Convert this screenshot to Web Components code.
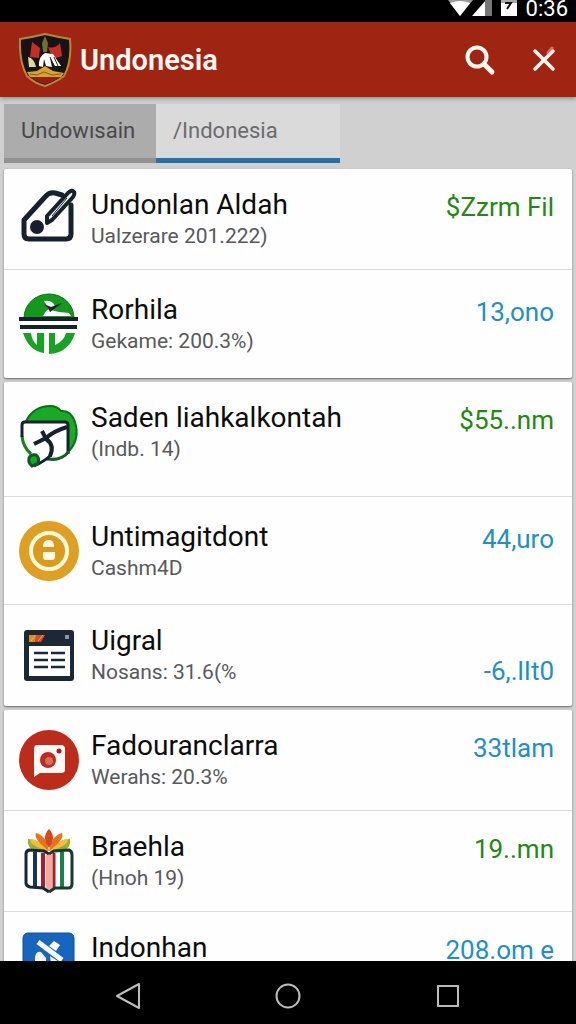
<!DOCTYPE html>
<html lang="id">
<head>
<meta charset="utf-8">
<meta name="viewport" content="width=device-width, initial-scale=1">
<title>Undonesia</title>
<style>
    body {
        margin: 0;
        font-family: Roboto, "Liberation Sans", sans-serif;
        background: #d0d0d1;
    }
</style>
</head>
<body>
<app-screen>
    <status-bar slot="top">0:36</status-bar>
    <app-header slot="top">Undonesia</app-header>
    <app-tabs slot="top" labels="Undowısain,/Indonesia" selected="1"></app-tabs>

    <account-card>
        <account-row icon="tag">Undonlan Aldah<span slot="detail">Ualzerare 201.222)</span><span slot="amount">$Zzrm Fil</span></account-row>
        <account-row icon="globe" size="tall" tone="blue">Rorhila<span slot="detail">Gekame: 200.3%)</span><span slot="amount">13,ono</span></account-row>
    </account-card>
    <account-card>
        <account-row icon="chat" size="large">Saden liahkalkontah<span slot="detail">(Indb. 14)</span><span slot="amount">$55..nm</span></account-row>
        <account-row icon="coin" size="tall" tone="blue">Untimagitdont<span slot="detail">Cashm4D</span><span slot="amount">44,uro</span></account-row>
        <account-row icon="sheet" tone="blue" amount="low">Uigral<span slot="detail">Nosans: 31.6(%</span><span slot="amount">-6,.lIt0</span></account-row>
    </account-card>
    <account-card>
        <account-row icon="camera" tone="blue">Fadouranclarra<span slot="detail">Werahs: 20.3%</span><span slot="amount">33tlam</span></account-row>
        <account-row icon="gift">Braehla<span slot="detail">(Hnoh 19)</span><span slot="amount">19..mn</span></account-row>
        <account-row icon="tools" tone="blue">Indonhan<span slot="amount">208.om e</span></account-row>
    </account-card>

    <nav-bar slot="bottom"></nav-bar>
</app-screen>

<script>
const icons = {
    tag: `
        <path d="M52 16V45Q52 50 47 50H10Q5 50 5 45V31L26 8Q30 3 36 4L43 6" fill="none" stroke="#17202f" stroke-width="5" stroke-linejoin="round" stroke-linecap="round"/>
        <path d="M49 4Q53 0 55 3Q56 5 54 8L33 31L28 34V27Z" fill="#fff" stroke="#17202f" stroke-width="4" stroke-linejoin="round"/>
        <path d="M33 27L48 9" stroke="#17202f" stroke-width="1"/>
        <circle cx="18" cy="38" r="7" fill="#17202f"/>`,
    globe: `
        <path d="M5 24A25 24 0 0 1 55 24Z" fill="#15991d" stroke="#087512" stroke-width="1"/>
        <path d="M25 7Q31 6 34 9L36 12L32 16L40 18L50 19L52 22H24L27 17L30 15Z" fill="#fff"/>
        <path d="M25 10L32 13L43 9L31 18L29 14Z" fill="#17202f"/>
        <path d="M0 25H59M1 33H58" stroke="#17202f" stroke-width="4"/>
        <path d="M4 39H12Q13 47 18 51V39H25V59Q10 57 4 39ZM30 39H36V51Q45 47 47 39H56Q50 59 30 60Z" fill="#17a321"/>`,
    chat: `
        <path d="M7 12Q15 -3 31 -3Q38 -3 42 2Q52 1 56 13Q61 29 51 41Q45 51 33 51Z" fill="#18aa25" stroke="#0b7118" stroke-width="2"/>
        <path d="M4 12H48V46Q40 52 28 50L17 46Q4 40 3 27Z" fill="#fff"/>
        <path d="M3 27Q4 38 12 45" fill="none" stroke="#14841d" stroke-width="3"/>
        <path d="M3 28V16Q3 13 6 13H46Q49 13 49 16V45" fill="none" stroke="#17202f" stroke-width="3"/>
        <path d="M50 42Q43 52 28 50" fill="none" stroke="#135f28" stroke-width="3"/>
        <path d="M32 46Q26 52 15 57" fill="none" stroke="#17202f" stroke-width="3"/>
        <path d="M10 49Q12 45 17 46Q22 50 18 55L13 57Q9 54 10 49Z" fill="#18aa25" stroke="#0e5920" stroke-width="3"/>
        <path d="M23 22L27 30Q36 36 31 47M15 35L27 29Q35 22 48 18" fill="none" stroke="#17202f" stroke-width="4"/>`,
    coin: `
        <circle cx="30" cy="30" r="30" fill="#dfa021"/>
        <circle cx="30" cy="30" r="18" fill="#dc9a1b" stroke="#fff9df" stroke-width="4"/>
        <path d="M24 26V24Q25 19 30 19Q34 19 35 24V26ZM24 31H36V36Q36 39 33 39H27Q24 39 24 36Z" fill="#fffbe8"/>`,
    sheet: `
        <rect x="5" y="4" width="50" height="51" rx="3" fill="#1b2836"/>
        <rect x="10" y="20" width="41" height="30" fill="#fff"/>
        <path d="M10 9H18L16 16H10Z" fill="#dc8c23"/>
        <path d="M17 9H26L22 16H16Z" fill="#d84c2a"/>
        <path d="M12 15L16 9M19 15L24 9" stroke="#efb32d" stroke-width="1"/>
        <rect x="46" y="9" width="4" height="4" fill="#8799a8"/>
        <path d="M15 27H29M32 27H46M15 34H29M32 34H46M15 41H29M32 41H46" stroke="#1b2836" stroke-width="2.5"/>`,
    camera: `
        <circle cx="30" cy="30" r="30" fill="#bd2c1b"/>
        <path d="M18 15H42Q46 15 46 19V40Q46 43 42 43H21L15 47V19Q15 15 18 15Z" fill="#fff8f4"/>
        <circle cx="29" cy="30" r="8" fill="#ba2c20"/>
        <circle cx="30" cy="31" r="4" fill="#d66c5c"/>
        <circle cx="40" cy="21" r="2.5" fill="#9e2118"/>`,
    gift: `
        <path d="M30 20Q7 23 9 8Q19 8 30 20Q53 23 51 8Q41 8 30 20Z" fill="#94b52a"/>
        <path d="M30 20Q8 14 12 8Q19 8 30 20Q52 14 48 8Q41 8 30 20Z" fill="#f5bc3c"/>
        <path d="M30 20Q14 8 17 2Q27 4 30 20Q46 8 43 2Q33 4 30 20Z" fill="#ec701d"/>
        <path d="M30 17Q22 6 30 -2Q38 6 30 17Z" fill="#d8451f"/>
        <path d="M10 19L25 20L30 23L35 20L50 19Q53 20 53 24V53Q53 57 49 57L36 57L30 61L24 57L11 56Q7 55 7 52V23Q7 20 10 19Z" fill="#fff"/>
        <path d="M16 21V55" stroke="#1b3557" stroke-width="4"/>
        <path d="M24 22V57" stroke="#a51d2b" stroke-width="4"/>
        <path d="M30 24V59" stroke="#f2aaa0" stroke-width="6"/>
        <path d="M35 22V57" stroke="#a51d2b" stroke-width="3"/>
        <path d="M43 21V56" stroke="#198345" stroke-width="4"/>
        <path d="M30 23L25 20L10 19Q7 20 7 23V52Q7 55 11 56L24 57L30 61" fill="none" stroke="#172640" stroke-width="3"/>
        <path d="M30 23L35 20L50 19Q53 20 53 24V53Q53 57 49 57L36 57L30 61" fill="none" stroke="#173b31" stroke-width="3"/>`,
    tools: `
        <rect x="4" y="0" width="51" height="55" rx="5" fill="#1665be" stroke="#114f98" stroke-width="1"/>
        <path d="M30 13L35 8L41 12L37 18Z" fill="#fff"/>
        <path d="M16 36V24Q17 18 22 19L27 25V36ZM31 23L45 32L41 36L32 31Z" fill="#edf6ff"/>
        <path d="M19 9L43 27" stroke="#fff" stroke-width="5"/>`
};

class AppScreen extends HTMLElement {
    constructor() {
        super();
        this.attachShadow({mode: "open"}).innerHTML = `
        <style>
            :host { display: flex; flex-direction: column; height: 100vh; overflow: hidden; }
            main {
                flex: 1;
                min-height: 0;
                overflow: hidden;
                display: flex;
                flex-direction: column;
                gap: 4px;
                padding: 6px 4px 0;
            }
        </style>
        <slot name="top"></slot>
        <main><slot></slot></main>
        <slot name="bottom"></slot>`;
    }
}
customElements.define('app-screen', AppScreen);

class StatusBar extends HTMLElement {
    constructor() {
        super();
        this.attachShadow({mode: "open"}).innerHTML = `
        <style>
            :host {
                display: flex;
                justify-content: flex-end;
                align-items: flex-start;
                gap: 8px;
                height: 22px;
                padding-right: 8px;
                overflow: hidden;
                background: #000;
                color: #fff;
                font-size: 22px;
                line-height: 17px;
            }
            svg { display: block; }
        </style>
        <svg width="72" height="22" viewBox="0 0 72 22" aria-hidden="true">
            <path d="M2 0H27L14 16Z" fill="#999"/>
            <path d="M4 3Q14 -1 24 3L14 16Z" fill="#fff"/>
            <path d="M26 16L40 0V16Z" fill="#fff"/>
            <path d="M39 0H46V16H39Z" fill="#777"/>
            <path d="M55 0H71V16H55Z" fill="#fff"/>
            <path d="M55 0H71V3H55Z" fill="#aaa"/>
            <path d="M59 3H65L61 9" fill="none" stroke="#111" stroke-width="2"/>
        </svg>
        <time><slot></slot></time>`;
    }
}
customElements.define('status-bar', StatusBar);

class AppHeader extends HTMLElement {
    constructor() {
        super();
        this.attachShadow({mode: "open"}).innerHTML = `
        <style>
            :host { display: block; z-index: 1; box-shadow: 0 1px 5px rgba(0, 0, 0, .4); }
            header {
                display: flex;
                align-items: center;
                height: 75px;
                padding: 0 8px 0 19px;
                background: #9f2412;
                color: #fff8f2;
            }
            h1 { flex: 1; margin: 0 0 0 8px; font-size: 29px; font-weight: 600; line-height: 36px; }
            button {
                display: grid;
                place-items: center;
                width: 48px;
                height: 48px;
                margin-left: 16px;
                padding: 0;
                border: 0;
                background: none;
                color: inherit;
            }
            svg { display: block; }
        </style>
        <header>
            <svg width="53" height="54" viewBox="0 0 53 54" aria-hidden="true">
                <path d="M1 6Q14 4 26 1Q39 4 51 6Q53 29 45 43Q37 49 26 53Q15 50 8 43Q0 29 1 6Z" fill="#151313" stroke="#b98932" stroke-width="2"/>
                <path d="M9 42L44 42Q37 48 26 51Q15 48 9 42Z" fill="#991c14"/>
                <path d="M13 9L21 15L20 25L11 24ZM29 14Q36 16 41 10L43 23L34 26Z" fill="#c92c25"/>
                <path d="M26 3L29 10L28 19H24L23 10Z" fill="#69742d"/>
                <path d="M9 24Q15 25 17 34L10 34Z" fill="#d6dc9a"/>
                <path d="M20 33Q19 24 26 20L34 21L42 33L36 33L31 25L33 34L27 33L25 26L24 34Z" fill="#fff"/>
                <path d="M31 24L35 33M35 24L39 33" stroke="#222" stroke-width="1"/>
                <path d="M8 39L18 38L26 33L34 38L45 40L42 44H11Z" fill="#d5a52b"/>
                <path d="M11 41L18 42L25 39L33 42L42 41" fill="none" stroke="#875a17" stroke-width="1"/>
            </svg>
            <h1><slot></slot></h1>
            <button type="button" aria-label="Cari">
                <svg width="32" height="32" viewBox="0 0 32 32">
                    <circle cx="13" cy="13" r="9.5" fill="none" stroke="currentColor" stroke-width="4"/>
                    <path d="M20 20L28 28" stroke="currentColor" stroke-width="5" stroke-linecap="round"/>
                </svg>
            </button>
            <button type="button" aria-label="Tutup">
                <svg width="28" height="28" viewBox="0 0 28 28">
                    <path d="M18 7L22 2" stroke="#e76b53" stroke-width="3" stroke-linecap="round"/>
                    <path d="M5 5L23 23M23 5L5 23" stroke="currentColor" stroke-width="3.5" stroke-linecap="round"/>
                </svg>
            </button>
        </header>`;
    }
}
customElements.define('app-header', AppHeader);

class AppTabs extends HTMLElement {
    constructor() {
        super();
        this.attachShadow({mode: "open"}).innerHTML = `
        <style>
            :host { display: block; padding: 7px 4px 0; }
            div { display: flex; }
            button {
                height: 59px;
                padding: 0 17px;
                border: 0;
                border-bottom: 5px solid #929292;
                background: #acacac;
                color: #48494b;
                font: 22px/32px Roboto, "Liberation Sans", sans-serif;
                text-align: left;
            }
            button:first-child { min-width: 152px; }
            button[aria-selected="true"] {
                min-width: 184px;
                border-color: #2a6ea9;
                background: #dadada;
                color: #6b6c6e;
            }
        </style>
        <div role="tablist"></div>`;
    }

    connectedCallback() {
        let list = this.shadowRoot.querySelector('div');
        let selected = Number(this.getAttribute('selected'));
        this.getAttribute('labels').split(',').forEach((label, index) => {
            let tab = document.createElement('button');
            tab.setAttribute('type', 'button');
            tab.setAttribute('role', 'tab');
            tab.setAttribute('aria-selected', index === selected);
            tab.textContent = label;
            list.appendChild(tab);
        });
    }
}
customElements.define('app-tabs', AppTabs);

class AccountCard extends HTMLElement {
    constructor() {
        super();
        this.attachShadow({mode: "open"}).innerHTML = `
        <style>
            :host {
                display: block;
                flex: none;
                border-radius: 2px;
                background: #fefefe;
                box-shadow: 0 1px 2px rgba(0, 0, 0, .5);
            }
            ::slotted(account-row:not(:last-child)) { border-bottom: 1px solid #dcddde; }
        </style>
        <slot></slot>`;
    }
}
customElements.define('account-card', AccountCard);

class AccountRow extends HTMLElement {
    constructor() {
        super();
        this.attachShadow({mode: "open"}).innerHTML = `
        <style>
            :host {
                --pad: 20px;
                display: flex;
                box-sizing: border-box;
                height: 101px;
                padding: 0 18px 0 15px;
                color: #0c0c0c;
            }
            :host([size="tall"]) { --pad: 24px; height: 108px; }
            :host([size="large"]) { height: 115px; }
            svg { align-self: center; flex: none; overflow: visible; }
            .text { flex: 1; min-width: 0; padding: var(--pad) 0 0 12px; white-space: nowrap; }
            h2 { margin: 0; font-size: 28px; font-weight: 400; line-height: 32px; }
            p { margin: 0; font-size: 21px; line-height: 30px; color: #58595b; }
            .amount { padding-top: var(--pad); font-size: 26px; line-height: 36px; color: #208a0e; }
            :host([tone="blue"]) .amount { color: #1d8fcb; }
            :host([amount="low"]) .amount { align-self: flex-end; padding: 0 0 17px; }
        </style>
        <svg width="60" height="60" viewBox="0 0 60 60" aria-hidden="true"></svg>
        <div class="text">
            <h2><slot></slot></h2>
            <p><slot name="detail"></slot></p>
        </div>
        <div class="amount"><slot name="amount"></slot></div>`;
    }

    connectedCallback() {
        this.shadowRoot.querySelector('svg').innerHTML = icons[this.getAttribute('icon')];
    }
}
customElements.define('account-row', AccountRow);

class NavBar extends HTMLElement {
    constructor() {
        super();
        this.attachShadow({mode: "open"}).innerHTML = `
        <style>
            :host { display: block; flex: none; background: #000; }
            nav { display: grid; grid-template-columns: repeat(3, 1fr); height: 56px; padding: 7px 48px 0; }
            button { display: grid; place-items: center; padding: 0; border: 0; background: none; color: #bcbcbc; }
            svg { display: block; fill: none; stroke: currentColor; stroke-width: 2; stroke-linejoin: round; }
        </style>
        <nav>
            <button type="button" aria-label="Kembali"><svg width="28" height="28" viewBox="0 0 28 28"><path d="M25 2V26L3 14Z"/></svg></button>
            <button type="button" aria-label="Beranda"><svg width="28" height="28" viewBox="0 0 28 28"><circle cx="14" cy="14" r="11.5"/></svg></button>
            <button type="button" aria-label="Aplikasi terbaru"><svg width="28" height="28" viewBox="0 0 28 28"><rect x="4" y="4" width="20" height="20"/></svg></button>
        </nav>`;
    }
}
customElements.define('nav-bar', NavBar);
</script>
</body>
</html>
